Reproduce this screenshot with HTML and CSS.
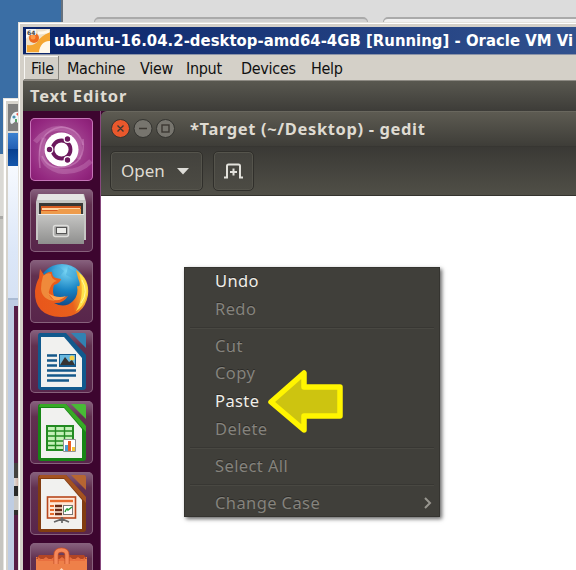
FILE: index.html
```html
<!DOCTYPE html>
<html lang="en">
<head>
<meta charset="utf-8">
<title>ubuntu-16.04.2-desktop-amd64-4GB [Running]</title>
<link rel="stylesheet" href="styles.css">
</head>
<body>
<div class="desktop">
  <div class="browser"><div class="tab tab-a"></div><div class="tab tab-b"></div></div>
  <div class="back-edge"></div>
  <div class="manager">
    <div class="manager-icon"><svg width="11" height="28" viewBox="0 0 11 28"><path d="M4 20Q1 20 3 13Q5 7 11 8V20L8 17Z" fill="#eef5f8"/><circle cx="6" cy="13" r="1.6" fill="#4b91b4"/><path d="M8 10l3-2v5z" fill="#e9574a"/><path d="M7 15h2v3H7z" fill="#58a268"/></svg></div>
    <div class="manager-caption"></div>
    <div class="manager-body"></div>
    <div class="manager-bottom"><div class="preview"><i class="p1"></i><i class="p2"></i><i class="p3"></i><i class="p4"></i><i class="p5"></i></div></div>
  </div>

  <div class="vm">
    <div class="vm-title">
      <svg class="vm-icon" width="24" height="24" viewBox="0 0 24 24">
        <rect width="24" height="24" fill="#eee1c8"/><path d="M0 0h8L0 10z" fill="#fff"/>
        <path d="M1 23V16Q9 17 12 12T24 3V12Q15 13 13 23Z" fill="#f5a632"/><path d="M13 24Q14 12 24 12V24Z" fill="#fff8ea"/>
        <path d="M12 4q7 0 11-2" stroke="#fff9ed" stroke-width="3" fill="none"/>
        <circle cx="8" cy="9" r="5" fill="#ee6b20"/><circle cx="7" cy="8" r="2.5" fill="#ff9a48"/>
        <path d="M0 0h10v6H0z" fill="#f4f4f2"/><text x="1" y="5.600" class="bits">64</text>
      </svg>
      <span class="vm-name">ubuntu-16.04.2-desktop-amd64-4GB [Running] - Oracle VM Vi</span>
    </div>
    <nav class="vm-menu">
      <span class="m-file">File</span><span class="m-machine">Machine</span><span class="m-view">View</span><span class="m-input">Input</span><span class="m-devices">Devices</span><span class="m-help">Help</span>
    </nav>
    <div class="guest">
      <div class="panel"><span>Text Editor</span></div>
      <div class="workspace">
        <aside class="launcher">
          <div class="tile dash"><svg width="63" height="63" viewBox="0 0 63 63">
            <g fill="none" stroke="#e0a5d5"><path d="M10 50Q5 13 31 9Q49 10 53 27" stroke-width="1.500" opacity=".4"/><path d="M5 24Q22 3 42 14Q53 23 48 41" stroke-width="5" opacity=".28"/><path d="M14 20Q5 46 29 53Q48 56 61 43" stroke-width="5" opacity=".28"/><path d="M53 21Q56 45 35 49Q18 52 12 38" stroke-width="1.500" opacity=".4"/></g>
            <circle cx="31.500" cy="31.500" r="17" fill="#fff"/>
            <circle cx="31.500" cy="31.500" r="9" fill="none" stroke="#6c185d" stroke-width="3.800"/>
            <g fill="#6c185d" stroke="#fff" stroke-width="1.200"><circle cx="19.500" cy="31.500" r="3.300"/><circle cx="37.500" cy="21" r="3.300"/><circle cx="37.500" cy="42" r="3.300"/></g>
          </svg></div>
          <div class="tile"><svg width="63" height="63" viewBox="0 0 63 63">
            <defs><linearGradient id="metal" x2="0" y2="1"><stop stop-color="#c6c6c4"/><stop offset="1" stop-color="#8f8f8e"/></linearGradient></defs>
            <path d="M8 5h46l2 8v38H6V13z" fill="#c6c6c4"/><path d="M9 5h44l2 6H7z" fill="#e4e4e2"/>
            <path d="M9 14h44v13H9z" fill="#383836"/><path d="M11 17h40v10H11z" fill="#d65b20"/><path d="M12 19h38v2H12z" fill="#ffd4a1"/><path d="M11 22h16l2-2h22v7H11z" fill="#ee9b4b"/>
            <path d="M8 25h46v30H8z" fill="url(#metal)"/><path d="M8 25.500h46" stroke="#ececea"/>
            <rect x="23.500" y="36.500" width="15" height="11" rx="2" fill="#a5a5a3" stroke="#dededc" stroke-width="1.500"/><rect x="26.500" y="38.500" width="10" height="6" fill="#ecece9" stroke="#555"/>
          </svg></div>
          <div class="tile"><svg width="63" height="63" viewBox="0 0 63 63">
            <defs><radialGradient id="globe" cx=".6" cy=".15" r=".9"><stop stop-color="#79d6f5"/><stop offset=".45" stop-color="#1883c3"/><stop offset="1" stop-color="#102b68"/></radialGradient><linearGradient id="fox" x1="0" x2="1" y1=".6" y2=".4"><stop stop-color="#e8561b"/><stop offset=".65" stop-color="#e9601c"/><stop offset="1" stop-color="#ffd83b"/></linearGradient></defs>
            <circle cx="32" cy="28" r="24" fill="url(#globe)"/><path d="M22 10l7-3 5 4-4 5-5-1zM38 7l9 6-3 6-8-4z" fill="#44a8d7" opacity=".5"/>
            <path d="M10 9l4 6q5-4 8-3 0 5 4 6l5 1q-1 4-7 6-2 6 0 11 5 4 14 0-5 8-14 7 11 6 19-2 6-6 4-15 5 2 1-8l-2-8q14 9 12 25-4 22-27 22Q4 56 5 31q1-8 4-13z" fill="url(#fox)"/>
            <path d="M13 16q5-4 8-2 0 5 6 7-5 1-7 7-4 8 5 13-13-1-14-12 0-6 2-13z" fill="#ef8a3b"/><path d="M18 33q9 6 18 3-5 5-12 4z" fill="#ffa04a"/>
            <path d="M49 13q11 9 7 25-3 9-10 13 10-17 3-38z" fill="#ffe24a"/><path d="M52 20q7 12-1 23" stroke="#fff6a2" fill="none"/>
          </svg></div>
          <div class="tile"><svg width="63" height="63" viewBox="0 0 63 63">
            <path d="M10 3h26l20 22v32q0 3-3 3H11q-3 0-3-3V6q0-3 2-3z" fill="#11598d"/><path d="M41 3h13q2 0 2 2v13z" fill="#3282b3"/><path d="M11 7h23l18 21v29H11z" fill="#f1f1ef"/>
            <path d="M17 25.500h10M17 30.500h10M17 35.500h10M17 40.500h29M17 45.500h29M17 50.500h22" stroke="#14588a" stroke-width="2.400"/>
            <path d="M29 24h17v13H29z" fill="#14588a"/><path d="M30 25h15v10H30z" fill="#68b8df"/><circle cx="42" cy="28" r="2.500" fill="#f4cf46"/><path d="M30 35l5-8 4 5 3-2 3 5z" fill="#343434"/>
          </svg></div>
          <div class="tile"><svg width="63" height="63" viewBox="0 0 63 63">
            <path d="M10 3h26l20 22v32q0 3-3 3H11q-3 0-3-3V6q0-3 2-3z" fill="#178516"/><path d="M10 3h26l20 22v6L34 6H9z" fill="#38aa26"/><path d="M41 3h13q2 0 2 2v13z" fill="#48ba36"/><path d="M11 7h23l18 21v29H11z" fill="#f1f1ef"/>
            <path d="M17 25h26v24H17z" fill="#c4f1b8" stroke="#228a21" stroke-width="2"/><path d="M17 30h26M17 35h26M17 40h26M17 44.500h26M25.500 25v24M34.500 25v24" stroke="#228a21" stroke-width="1.400"/>
            <path d="M33.500 38.500h12v12h-12z" fill="#fff" stroke="#929292"/><path d="M35 44h3v6h-3z" fill="#4a9bd0"/><path d="M38 40h3v10h-3z" fill="#e95e23"/><path d="M42 46h3v4h-3z" fill="#f5c432"/>
          </svg></div>
          <div class="tile"><svg width="63" height="63" viewBox="0 0 63 63">
            <path d="M10 3h26l20 22v32q0 3-3 3H11q-3 0-3-3V6q0-3 2-3z" fill="#813c10"/><path d="M10 3h26l20 22v6L34 6H9z" fill="#a45221"/><path d="M41 3h13q2 0 2 2v13z" fill="#b66532"/><path d="M11 7h23l18 21v29H11z" fill="#f1f1ef"/>
            <rect x="17.500" y="25" width="28" height="21" fill="#ffe8d8" stroke="#b7471d" stroke-width="1.600"/><path d="M20 29h23" stroke="#e66a2d" stroke-width="2.400"/><path d="M20 34h4M20 38h4M20 42h4" stroke="#e66a2d" stroke-width="2"/><path d="M25 34h7M25 38h7M25 42h7" stroke="#672915" stroke-width="2.400"/><rect x="33.500" y="33.500" width="9" height="9" fill="#fff" stroke="#777"/><path d="M35 40q2-5 3-2l4-3" fill="none" stroke="#279b38" stroke-width="1.500"/>
            <path d="M24 50l8-3 7 3M32 45v6" stroke="#666" stroke-width="1.700" fill="none"/>
          </svg></div>
          <div class="tile"><svg width="63" height="63" viewBox="0 0 63 63">
            <path d="M6 14h51v49H6z" fill="#ee8049"/><path d="M6 16l3-4h45l3 4z" fill="#b34524"/><path d="M8 14l4 3 4-3 4 3 4-3 4 3 4-3 4 3 4-3 4 3 4-3 4 3 3-3v4H8z" fill="#e86f3f"/><path d="M26 21V12q0-5 5.500-5T37 12v9" fill="none" stroke="#c4502a" stroke-width="5"/><path d="M26 21V12q0-5 5.500-5T37 12v9" fill="none" stroke="#f5885a" stroke-width="3.500"/><path d="M31.500 25l3 3h-6z" fill="#ffd4ba"/>
          </svg></div>
        </aside>
        <main class="gedit">
          <header class="gedit-title">
            <span class="controls"><svg width="64" height="21" viewBox="0 0 64 21"><g stroke="#343430"><circle cx="9.500" cy="9.500" r="9" fill="#e9582c"/><circle cx="32" cy="9.500" r="9" fill="#77756e"/><circle cx="54.500" cy="9.500" r="9" fill="#77756e"/></g><g fill="none" stroke="#3c3832" stroke-width="1.400"><path d="M6.500 6.500l6 6M12.500 6.500l-6 6M28 9.500h8"/><rect x="51" y="6" width="7" height="7"/></g></svg></span>
            <span class="gedit-name">*Target (~/Desktop) - gedit</span>
          </header>
          <div class="toolbar">
            <button class="open"><span>Open</span><svg width="12" height="7"><path d="M0 0h12L6 6.500z" fill="#deddd8"/></svg></button>
            <button class="newtab"><svg width="21" height="17" viewBox="0 0 21 17"><path d="M1 14.500h3V3q0-1.500 1.500-1.500h10Q17 1.500 17 3v11.500h3" fill="none" stroke="#e2e1db" stroke-width="2"/><path d="M10.500 5.500v7M7 9h7" stroke="#e2e1db" stroke-width="2"/></svg></button>
          </div>
          <div class="document"></div>
        </main>
      </div>
    </div>
  </div>

  <div class="context">
    <div class="item on"><span>Undo</span></div>
    <div class="item"><span>Redo</span></div>
    <hr>
    <div class="item"><span>Cut</span></div>
    <div class="item"><span>Copy</span></div>
    <div class="item on"><span>Paste</span></div>
    <div class="item"><span>Delete</span></div>
    <hr>
    <div class="item"><span>Select All</span></div>
    <hr>
    <div class="item"><span>Change Case</span><svg class="chev" width="8" height="12"><path d="M1 1l5 5-5 5" fill="none" stroke="#98968f" stroke-width="2"/></svg></div>
  </div>
  <svg class="arrow" width="78" height="66" viewBox="0 0 78 66"><path d="M4 33L37 4V18H73V47H37V61Z" fill="#cdc410" stroke="#fff500" stroke-width="5.500" stroke-linejoin="round"/></svg>
</div>
</body>
</html>
```

FILE: styles.css
```css
* { box-sizing: border-box; }
body { margin: 0; }
.desktop { position: relative; width: 576px; height: 570px; overflow: hidden; background: #3a6ea5; font-family: "Noto Sans", sans-serif; }
.desktop svg { display: block; flex: none; }

.browser { position: absolute; left: 61px; top: 0; width: 515px; height: 40px; background: #dcdcdc; border-left: 2px solid #66717d; display: flex; gap: 15px; padding: 17px 0 0 31px; }
.tab { height: 12px; border: 1px solid #aaa; border-top-width: 2px; border-radius: 5px 5px 0 0; background: #d1d1d1; flex: none; }
.tab-a { width: 274px; }
.tab-b { width: 230px; background: #f0f0f0; }

.back-edge { position: absolute; left: 0; top: 154px; width: 5px; height: 416px; background: linear-gradient(#dad9d5 0 62px, #aaa9a6 62px 65px, #c6c5c0 65px); }
.manager { position: absolute; left: 3px; top: 98px; width: 40px; height: 480px; background: #d6d3cc; border: 1px solid #e5e3de; box-shadow: inset 2px 2px #fff; padding: 5px 0 0 4px; display: flex; flex-direction: column; }
.manager-icon { height: 29px; background: #7e7e7e; border-bottom: 2px solid #deddd8; flex: none; }
.manager-caption { height: 33px; background: linear-gradient(#3d82d0, #235fb4 48%, #073f8f 50%, #1557ac); flex: none; }
.manager-body { height: 134px; background: linear-gradient(#f7faff, #dce7f8 65%, #d6e2f4); border-bottom: 2px solid #aabbd3; flex: none; }
.manager-bottom { flex: 1; background: #bfcde3; padding: 6px 0 0 6px; }
.preview { height: 100%; background: #571e46; display: flex; flex-direction: column; padding-top: 157px; }
.preview i { flex: none; }
.p1 { height: 15px; background: #454341; }
.p2 { height: 8px; background: linear-gradient(90deg, #ddd, #b9502b, #338bb8); }
.p3 { height: 10px; background: #292929; }
.p4 { height: 14px; background: #cac9c7; }
.p5 { height: 5px; background: #30302e; }

.vm { position: absolute; left: 18px; top: 22px; width: 571px; height: 560px; background: #d4d0c8; border: 1px solid #e4e2dc; box-shadow: inset 1px 1px #fff; padding: 4px; display: flex; flex-direction: column; }
.vm-title { height: 28px; flex: none; background: linear-gradient(90deg, #0a246a, #32528f); border-bottom: 1px solid #8c94a8; display: flex; align-items: center; padding-left: 3px; }
.bits { font: bold 6px "DejaVu Sans"; fill: #444; }
.vm-name { margin-left: 4px; color: #fff; font-family: "DejaVu Sans", sans-serif; font-stretch: condensed; font-weight: bold; font-size: 16.500px; line-height: 28px; white-space: nowrap; letter-spacing: .04px; }
.vm-menu { height: 26px; flex: none; display: flex; font-family: "DejaVu Sans", sans-serif; font-stretch: condensed; font-size: 16px; line-height: 26px; letter-spacing: -.3px; color: #111; padding: 1px 0 0 1px; border-bottom: 1px solid #8d8a83; }
.vm-menu span { white-space: nowrap; height: 24px; flex: none; }
.m-file { width: 35px; padding-left: 7px; border-right: 1px solid #88867f; border-bottom: 1px solid #88867f; box-shadow: inset 1px 1px #f8f7f4; }
.m-machine { width: 81px; padding-left: 8px; }
.m-view { width: 46px; }
.m-input { width: 55px; }
.m-devices { width: 70px; }

.guest { flex: 1; display: flex; flex-direction: column; background: #3d0a30; }
.panel { height: 30px; flex: none; background: linear-gradient(#595850, #3d3c38); color: #dfdbd2; font: bold 16.500px/30px "Noto Sans", sans-serif; letter-spacing: .8px; padding-left: 7px; }
.panel span { display: inline-block; white-space: nowrap; }
.workspace { display: flex; flex: 1; }
.launcher { width: 78px; flex: none; border-right: 1px solid #87497e; background: #3d052f; padding: 7px 0 0 7px; display: flex; flex-direction: column; gap: 7.800px; }
.tile { width: 63px; height: 63px; flex: none; border-radius: 5px; background: linear-gradient(#88627f, #61304f 25%, #58254b); box-shadow: inset 0 0 0 1px #87617c; }
.dash { background: radial-gradient(circle, #b266a2, #942880 75%, #861b71); box-shadow: inset 0 0 0 1px #c675b8; }

.gedit { flex: 1; display: flex; flex-direction: column; }
.gedit-title { height: 35px; flex: none; background: linear-gradient(#5d5b52, #3e3d38); border-top: 1px solid #69675e; border-radius: 6px 0 0 0; display: flex; align-items: center; padding-left: 10px; }
.gedit-name { margin-left: 15px; color: #dfdbd2; font: bold 16.500px/32px "Noto Sans", sans-serif; letter-spacing: .63px; white-space: nowrap; }
.toolbar { height: 50px; flex: none; display: flex; align-items: flex-start; gap: 10px; padding: 4px 0 0 9px; background: linear-gradient(#3a3935, #504f47); border-top: 1px solid #373632; border-bottom: 1px solid #34332e; }
.toolbar button { height: 40px; margin: 0; padding: 0; border: 1px solid #302f2b; border-radius: 5px; background: linear-gradient(#43423d, #4c4b44); box-shadow: inset 0 0 0 1px #55544c; }
.toolbar .open { width: 93px; display: flex; align-items: center; color: #dfdbd2; font: 17px/38px "Noto Sans", sans-serif; padding: 0 13px 0 10px; justify-content: space-between; }
.toolbar .newtab { width: 41px; display: flex; align-items: center; justify-content: center; }
.document { flex: 1; background: #fff; }

.context { position: absolute; left: 184px; top: 267px; width: 256px; height: 250px; background: #403f3a; border: 1px solid #353430; box-shadow: 2px 2px 4px #0009; font: 16.500px/26px "Noto Sans", sans-serif; letter-spacing: .4px; color: #85837d; padding: 0 5px; }
.item { height: 27.700px; display: flex; align-items: center; justify-content: space-between; padding: 0 2px 2px 25px; white-space: nowrap; text-shadow: 0 -1px #2c2b28; }
.on { color: #f0eee8; }
hr { height: 2px; border: 0; border-top: 1px solid #383733; border-bottom: 1px solid #494842; margin: 3.700px 0; }
.arrow { position: absolute; left: 267px; top: 369px; }
```
